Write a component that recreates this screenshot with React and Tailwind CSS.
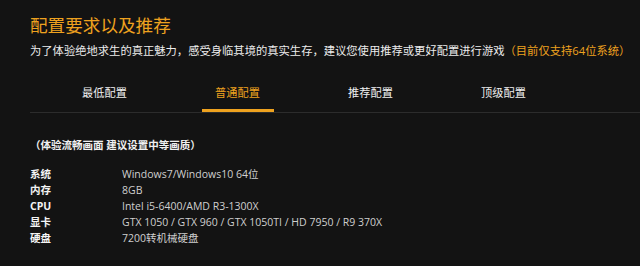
const tabs = ["最低配置", "普通配置", "推荐配置", "顶级配置"];

const specs = [
  ["系统", "Windows7/Windows10 64位"],
  ["内存", "8GB"],
  ["CPU", "Intel i5-6400/AMD R3-1300X"],
  ["显卡", "GTX 1050 / GTX 960 / GTX 1050TI / HD 7950 / R9 370X"],
  ["硬盘", "7200转机械硬盘"],
];

const font = { fontFamily: '"Open Sans", "Noto Sans CJK SC", sans-serif' };

export default function App() {
  return (
    <div className="w-[640px] h-[266px] bg-[#131313] overflow-hidden" style={font}>
      <div className="pl-[30px] pt-[12px]">
        <h1 className="text-[17.6px] leading-[26px] text-[#eea21f] font-normal">配置要求以及推荐</h1>
        <p className="mt-[6px] text-[11.3px] leading-[14px] text-[#ececec] whitespace-nowrap">
          为了体验绝地求生的真正魅力，感受身临其境的真实生存，建议您使用推荐或更好配置进行游戏
          <span className="text-[#eea21f]">（目前仅支持64位系统）</span>
        </p>
      </div>

      <div className="ml-[30px] mt-[28px] border-b border-[#2c2c2c] flex pl-[8px]">
        {tabs.map((t, i) => (
          <div key={t} className="w-[133px] flex flex-col items-center">
            <span
              className={`text-[11.2px] leading-[14px] ${i === 1 ? "text-[#eea21f]" : "text-[#f0f0f0]"}`}
            >
              {t}
            </span>
            <div className={`mt-[9px] w-[72px] h-[3px] ${i === 1 ? "bg-[#eea21f]" : "bg-transparent"}`} />
          </div>
        ))}
      </div>

      <div className="pl-[30px] pt-[25px]">
        <p className="text-[10.5px] leading-[14px] font-bold text-[#f0f0f0]">（体验流畅画面 建议设置中等画质）</p>
        <div className="mt-[15px] flex flex-col">
          {specs.map(([k, v]) => (
            <div key={k} className="flex h-[16px] items-center">
              <span className="w-[92px] text-[10.5px] font-bold text-[#f4f4f4]">{k}</span>
              <span className="text-[10.5px] text-[#cfcfcf]">{v}</span>
            </div>
          ))}
        </div>
      </div>
    </div>
  );
}
